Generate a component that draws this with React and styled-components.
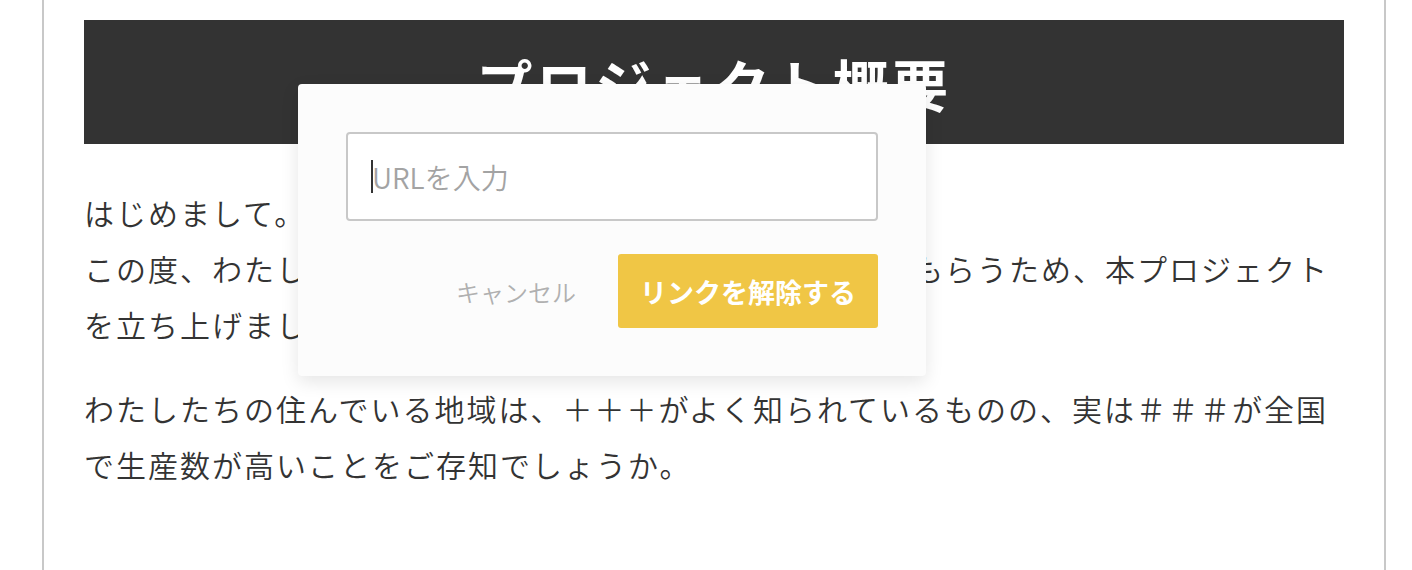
import React from 'react';
import styled, { createGlobalStyle } from 'styled-components';

const GlobalStyle = createGlobalStyle`
  html, body {
    margin: 0;
    padding: 0;
    background: #fff;
  }
  body {
    font-family: "Noto Sans CJK JP", "Noto Sans", sans-serif;
    color: #333;
  }
`;

const Page = styled.div`
  position: relative;
  box-sizing: border-box;
  width: 1344px;
  min-height: 100vh;
  margin-left: 42px;
  padding: 20px 40px 40px;
  border-left: 2px solid #c8c8c8;
  border-right: 2px solid #c8c8c8;
`;

const SectionTitle = styled.h2`
  display: flex;
  align-items: center;
  justify-content: center;
  height: 124px;
  margin: 0 0 40px;
  background: #333;
  color: #fff;
  font-size: 56px;
  font-weight: 700;
  letter-spacing: 0.06em;
`;

const Paragraph = styled.p`
  margin: 0 0 28px;
  font-size: 30px;
  font-weight: 350;
  line-height: 56px;
  letter-spacing: 2px;
  color: #333;
  white-space: nowrap;
`;

const Popover = styled.div`
  position: absolute;
  top: 84px;
  left: 254px;
  box-sizing: border-box;
  width: 628px;
  padding: 48px;
  background: #fcfcfc;
  border-radius: 4px;
  box-shadow: 0 6px 18px rgba(0, 0, 0, 0.1);
`;

const InputWrap = styled.div`
  position: relative;
`;

const UrlInput = styled.input`
  display: block;
  box-sizing: border-box;
  width: 100%;
  height: 89px;
  padding: 0 24px;
  border: 2px solid #c8c8c8;
  border-radius: 4px;
  background: #fff;
  font-family: inherit;
  font-size: 28px;
  font-weight: 350;
  color: #333;
  caret-color: transparent;
  outline: none;

  &::placeholder {
    color: #a3a3a3;
  }
`;

// fake text caret, the focused field in the shot shows one
const Caret = styled.span`
  position: absolute;
  left: 25px;
  top: 28px;
  width: 2px;
  height: 33px;
  background: #333;
  pointer-events: none;
`;

const Actions = styled.div`
  display: flex;
  justify-content: flex-end;
  align-items: center;
  gap: 42px;
  margin-top: 33px;
`;

const TextButton = styled.button`
  padding: 0;
  border: none;
  background: none;
  font-family: inherit;
  font-size: 24px;
  font-weight: 350;
  color: #b0b0b0;
  cursor: pointer;
`;

const PrimaryButton = styled.button`
  width: 260px;
  height: 74px;
  padding: 0;
  border: none;
  border-radius: 3px;
  background: #f0c645;
  color: #fff;
  font-family: inherit;
  font-size: 27px;
  font-weight: 700;
  cursor: pointer;
`;

export default function App() {
  return (
    <>
      <GlobalStyle />
      <Page>
        <SectionTitle>プロジェクト概要</SectionTitle>
        <Paragraph>
          はじめまして。
          <br />
          この度、わたしたちの町の特産品を多くの皆さまに知ってもらうため、本プロジェクト
          <br />
          を立ち上げました。
        </Paragraph>
        <Paragraph>
          わたしたちの住んでいる地域は、＋＋＋がよく知られているものの、実は＃＃＃が全国
          <br />
          で生産数が高いことをご存知でしょうか。
        </Paragraph>

        <Popover>
          <InputWrap>
            <UrlInput type="text" placeholder="URLを入力" />
            <Caret />
          </InputWrap>
          <Actions>
            <TextButton type="button">キャンセル</TextButton>
            <PrimaryButton type="button">リンクを解除する</PrimaryButton>
          </Actions>
        </Popover>
      </Page>
    </>
  );
}
